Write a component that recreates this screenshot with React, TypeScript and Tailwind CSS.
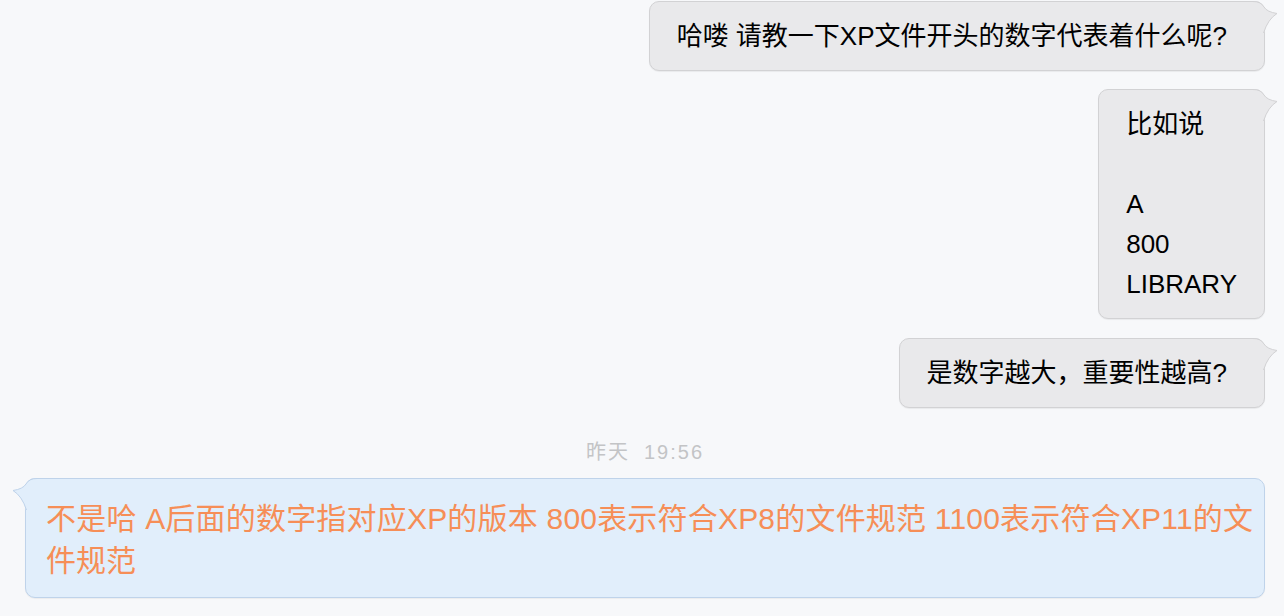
function Tail({ fill, stroke, left }: { fill: string; stroke: string; left?: boolean }) {
  return (
    <svg
      width="26"
      height="36"
      viewBox="0 0 26 36"
      className={
        left
          ? "absolute left-[-15px] top-[-1px] -scale-x-100"
          : "absolute right-[-15px] top-[-1px]"
      }
    >
      <path
        d="M0 0.5 Q8 0.5 11 6 Q14 11 24 12.5 Q15 18 11 32 L0 32 Z"
        fill={fill}
      />
      <path
        d="M0 0.5 Q8 0.5 11 6 Q14 11 24 12.5 Q15 18 10.5 32"
        fill="none"
        stroke={stroke}
        strokeWidth="1"
      />
    </svg>
  );
}

function Sent({ children, wide }: { children: React.ReactNode; wide?: boolean }) {
  return (
    <div
      className={
        "relative self-end mr-[19px] rounded-[10px] border border-[#d2d2d4] bg-[#e9e9eb] pl-[27px] py-[14px] text-[26px] leading-[40px] text-black shadow-[0_1px_1px_rgba(0,0,0,0.06)] " +
        (wide ? "pr-[37px]" : "pr-[27px]")
      }
    >
      <Tail fill="#e9e9eb" stroke="#d2d2d4" />
      {children}
    </div>
  );
}

export default function App() {
  return (
    <div
      className="min-h-screen w-full bg-[#f7f8fa] pt-[1px] flex flex-col"
      style={{ fontFamily: '"Liberation Sans", "Noto Sans CJK SC", sans-serif' }}
    >
      <Sent wide>哈喽 请教一下XP文件开头的数字代表着什么呢?</Sent>

      <div className="h-[18px]" />
      <Sent>
        <div>比如说</div>
        <div>&nbsp;</div>
        <div>A</div>
        <div>800</div>
        <div>LIBRARY</div>
      </Sent>

      <div className="h-[19px]" />
      <Sent wide>是数字越大，重要性越高?</Sent>

      <div className="mt-[30px] flex justify-center text-[20px] leading-[28px] tracking-[2px] text-[#c3c4c6] pl-[6px]">
        <span>昨天</span>
        <span className="ml-[14px]">19:56</span>
      </div>

      <div className="relative mt-[12px] ml-[25px] mr-[19px] rounded-[10px] border border-[#bfd3ea] bg-[#e1eefb] pl-[20px] pr-[10px] pt-[19px] pb-[15px] text-[30px] leading-[42px] text-[#f68e57] shadow-[0_1px_1px_rgba(0,0,0,0.05)]">
        <Tail fill="#e1eefb" stroke="#bfd3ea" left />
        <div className="whitespace-nowrap tracking-[0.2px]">
          不是哈 A后面的数字指对应XP的版本 800表示符合XP8的文件规范 1100表示符合XP11的文
        </div>
        <div>件规范</div>
      </div>
    </div>
  );
}
